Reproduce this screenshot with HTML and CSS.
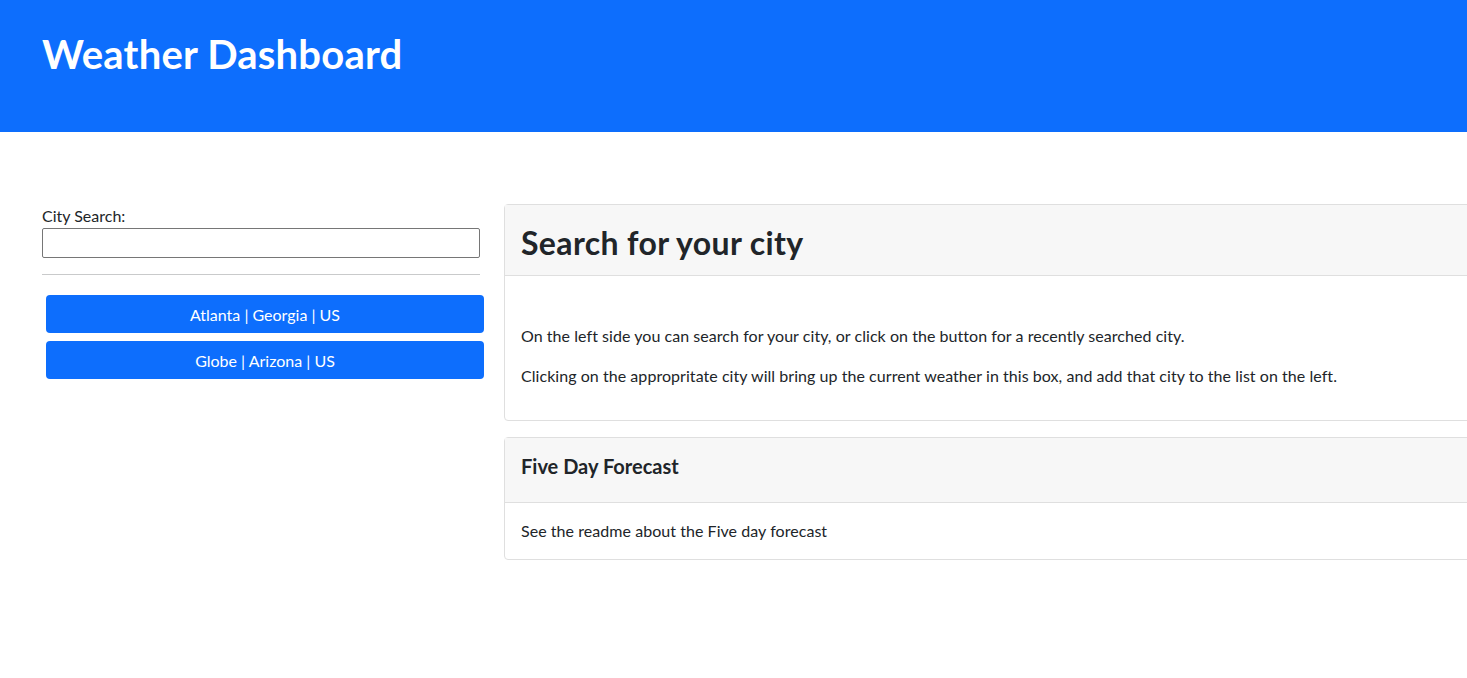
FILE: index.html
```html
<!DOCTYPE html>
<html lang="en">
<head>
<meta charset="utf-8">
<title>Weather Dashboard</title>
<link rel="stylesheet" href="styles.css">
</head>
<body>
<header class="jumbo">
  <h1 class="jumbo-title">Weather Dashboard</h1>
</header>
<main class="main">
  <aside class="side">
    <label class="side-label" for="city">City Search:</label>
    <input class="side-input" id="city" type="text">
    <hr class="side-hr">
    <div class="city-list">
      <button class="city-btn" type="button">Atlanta | Georgia | US</button>
      <button class="city-btn" type="button">Globe | Arizona | US</button>
    </div>
  </aside>
  <section class="content">
    <div class="card">
      <div class="card-header card-header-lg">
        <h2 class="card-title-lg">Search for your city</h2>
      </div>
      <div class="card-body card-body-lg">
        <p class="card-text">On the left side you can search for your city, or click on the button for a recently searched city.</p>
        <p class="card-text">Clicking on the appropritate city will bring up the current weather in this box, and add that city to the list on the left.</p>
      </div>
    </div>
    <div class="card">
      <div class="card-header">
        <h5 class="card-title-sm">Five Day Forecast</h5>
      </div>
      <div class="card-body">
        <p class="card-text card-text-last">See the readme about the Five day forecast</p>
      </div>
    </div>
  </section>
</main>
</body>
</html>
```

FILE: styles.css
```css
html, body {
  margin: 0;
  padding: 0;
}
body {
  font-family: Lato, "Noto Sans", sans-serif;
  font-size: 16px;
  line-height: 1.5;
  color: #212529;
  background: #fff;
  overflow-x: hidden;
}
.jumbo {
  background: #0d6efd;
  height: 132px;
  padding: 30px 42px 0;
  box-sizing: border-box;
}
.jumbo-title {
  margin: 0;
  color: #fff;
  font-size: 40px;
  font-weight: 700;
  line-height: 48px;
  letter-spacing: 0.2px;
}
.main {
  display: flex;
  align-items: flex-start;
  padding: 72px 0 0 42px;
  gap: 24px;
  overflow: hidden;
}
.side {
  width: 438px;
  flex: 0 0 438px;
  display: flex;
  flex-direction: column;
}
.side-label {
  font-size: 16px;
  line-height: 24px;
}
.side-input {
  box-sizing: border-box;
  height: 30px;
  width: 438px;
  margin: 0;
  border: 1px solid #767676;
  border-radius: 2px;
  font-size: 16px;
}
.side-hr {
  margin: 16px 0 20px;
  border: 0;
  border-top: 1px solid #c9cacb;
}
.city-list {
  display: flex;
  flex-direction: column;
  gap: 8px;
  padding-left: 4px;
}
.city-btn {
  height: 38px;
  border: 0;
  border-radius: 4px;
  background: #0d6efd;
  color: #fff;
  font-family: inherit;
  font-size: 16px;
  width: 438px;
}
.content {
  flex: 0 0 1100px;
  display: flex;
  flex-direction: column;
  gap: 16px;
}
.card {
  border: 1px solid #dfdfdf;
  border-radius: 4px;
  background: #fff;
}
.card-header {
  background: #f7f7f7;
  border-bottom: 1px solid #dfdfdf;
  padding: 16px 16px 16px;
}
.card-header-lg {
  padding: 19px 16px 13px;
}
.card-title-lg {
  margin: 0;
  font-size: 32px;
  font-weight: 700;
  line-height: 38px;
  letter-spacing: 0.35px;
}
.card-title-sm {
  margin: 0 0 8px;
  font-size: 20px;
  font-weight: 700;
  line-height: 24px;
}
.card-body {
  padding: 16px;
}
.card-body-lg {
  padding-top: 48px;
}
.card-text {
  margin: 0 0 16px;
  letter-spacing: 0.05px;
}
.card-text-last {
  margin: 0;
}
```
